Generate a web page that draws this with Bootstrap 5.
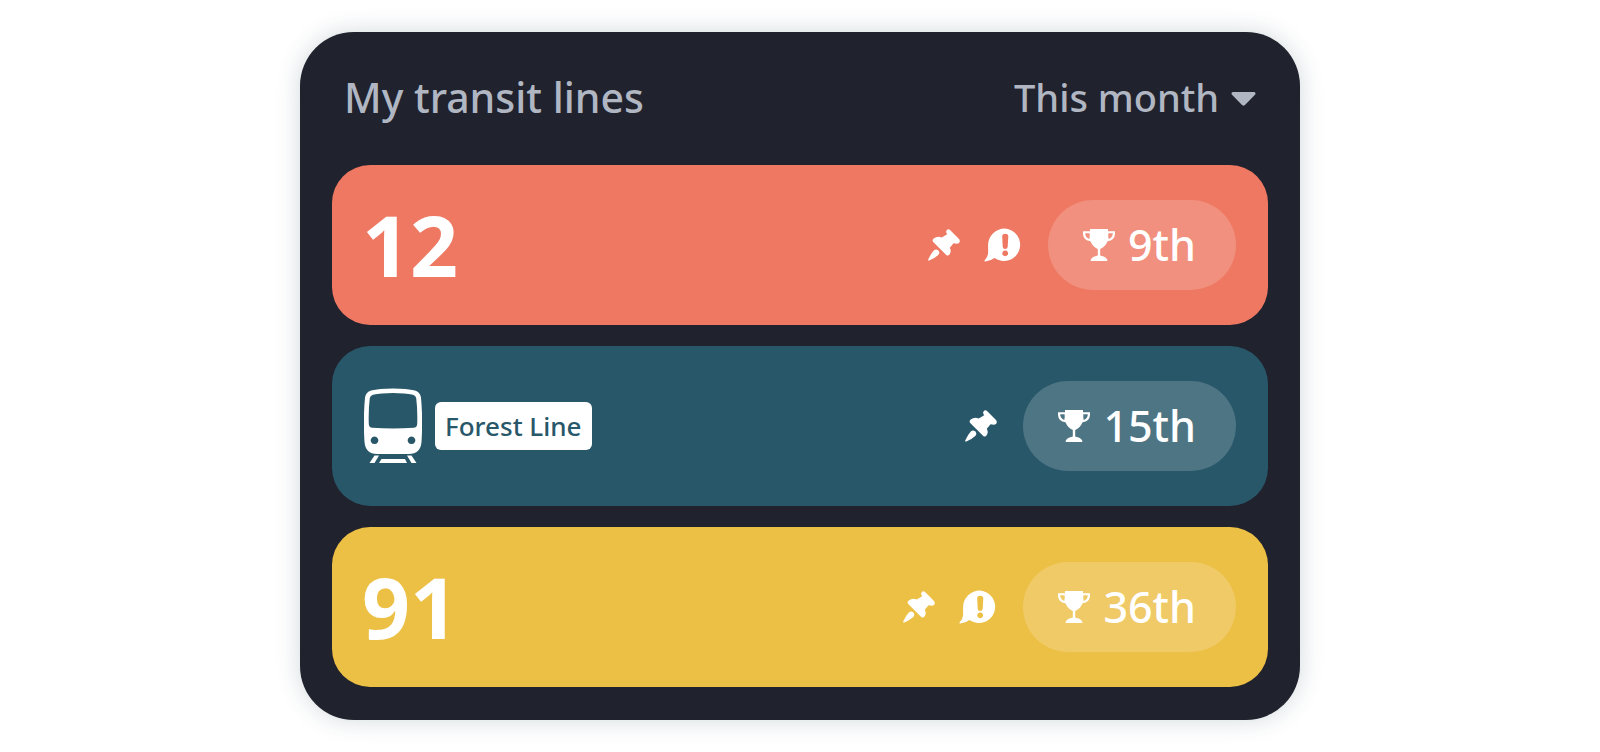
<!DOCTYPE html>
<html lang="en">
<head>
<meta charset="utf-8">
<meta name="viewport" content="width=device-width, initial-scale=1">
<title>My transit lines</title>
<link href="https://cdn.jsdelivr.net/npm/bootstrap@5.3.0/dist/css/bootstrap.min.css" rel="stylesheet">
<style>
  body { background: #fff; font-family: "Noto Sans", "Open Sans", sans-serif; }
  .panel { max-width: 1000px; padding: 32px 32px 33px; background: #20222d; border-radius: 54px; box-shadow: 0 0 24px rgba(32, 66, 82, .2); }
  .panel-head { height: 101px; padding: 0 12px; color: #b0b7c3; }
  .panel-title { font-size: 41px; line-height: 66px; font-weight: 500; }
  .period { gap: 11px; font-size: 38px; line-height: 66px; font-weight: 500; }
  .period select { appearance: none; color: inherit; background: transparent; font: inherit; }
  .period svg { margin-top: 4px; }
  .line-list { gap: 21px; }
  .line-row { height: 160px; padding: 0 32px 0 30px; border-radius: 38px; color: #fff; }
  .line-coral { background: #ee7862; }
  .line-teal { background: #28576a; }
  .line-gold { background: #ecbf45; }
  .line-number { font-size: 84px; line-height: 96px; font-weight: 700; }
  .vehicle { margin: 0 13px 0 2px; }
  .line-name { height: 48px; padding: 0 10px; border-radius: 6px; background: #fff; color: #28576a; font-size: 26px; line-height: 48px; font-weight: 500; }
  .status { gap: 24px; margin-right: 26px; }
  .rank { height: 90px; padding: 0 40px 0 35px; gap: 13px; border-radius: 45px; background: rgba(255, 255, 255, .18); font-size: 43px; line-height: 90px; font-weight: 500; }
  svg { display: block; flex: none; }
</style>
</head>
<body>
<svg width="0" height="0" class="position-absolute" aria-hidden="true">
  <symbol id="pin" viewBox="0 0 32 32">
    <path d="M18.500 1.500Q20-.8 21.800 .8L31 10Q32.600 12 31 14Q29.500 15.200 25.600 14.300L21.800 18.700Q23.800 22.500 21.500 25.500Q20 27.600 18 25.700L5.200 13Q3.800 11.300 5.700 9.600Q9.500 6.700 13.700 8.600L19.200 5.300Q17.500 3.200 18.500 1.500Z"/>
    <path d="M6 21.300Q8.100 19.500 10.300 21.500Q12.300 23.800 10.300 25.900Q7.500 28.600 1.300 31.500Q-.3 31.700.3 30.300Q3.200 24.200 6 21.300Z"/>
  </symbol>
  <symbol id="alert" viewBox="0 0 38 34">
    <path fill-rule="evenodd" d="M21 .5a16.300 16.300 0 1 1-10.500 29.600Q6.500 33.300 1.200 33.500Q-.3 33.400.7 32.300Q4 28.500 4.100 25V17A16.700 16.700 0 0 1 21 .5ZM18.200 8.300L18.700 18.800Q19 21 21.200 21Q23.400 21 23.700 18.800L24.300 8.300Q24.300 5.800 21.200 5.800Q18.200 5.800 18.200 8.300ZM21.200 22.500a2.900 2.900 0 1 0 .01 0Z"/>
  </symbol>
  <symbol id="trophy" viewBox="0 0 32 32">
    <path fill-rule="evenodd" d="M7 0H25V2.200H32V5Q31.500 11.500 24.600 12.300Q22 18.200 17.200 20V26.500Q22.800 27.600 24.300 30.800V32H7.700V30.800Q9.200 27.600 14.800 26.500V20Q10 18.200 7.400 12.300Q.5 11.500 0 5V2.200H7ZM2.200 4.300Q2.200 8.700 6.300 9.900Q7 7 6.600 4.300ZM29.800 4.300H25.400Q25 7 25.700 9.900Q29.800 8.700 29.800 4.300Z"/>
  </symbol>
</svg>

<main class="container-fluid py-3 px-3">
  <section class="panel mx-auto my-3">
    <header class="panel-head d-flex justify-content-between align-items-start">
      <h1 class="panel-title m-0">My transit lines</h1>
      <label class="period d-flex align-items-center">
        <select class="border-0 p-0" aria-label="Period"><option>This month</option></select>
        <svg width="25" height="14" viewBox="0 0 25 14" fill="currentColor" aria-hidden="true"><path d="M2 0H23Q25.500.7 24 2.700L14.500 12.500Q12.500 14.800 10.500 12.500L1 2.700Q-.5.7 2 0Z"/></svg>
      </label>
    </header>

    <div class="line-list d-flex flex-column">
      <article class="line-row line-coral d-flex align-items-center">
        <span class="line-number">12</span>
        <div class="status d-flex align-items-center ms-auto">
          <svg width="32" height="32" fill="currentColor"><use href="#pin"/></svg>
          <svg width="38" height="34" fill="currentColor"><use href="#alert"/></svg>
        </div>
        <div class="rank d-flex align-items-center">
          <svg width="32" height="32" fill="currentColor"><use href="#trophy"/></svg>
          <span>9th</span>
        </div>
      </article>

      <article class="line-row line-teal d-flex align-items-center">
        <svg class="vehicle" width="58" height="76" viewBox="0 0 58 76" fill="currentColor" aria-hidden="true">
          <path fill-rule="evenodd" d="M29 .5Q43 .5 51 2.500Q56 4 57 9.500Q59 31 57.500 54Q56.500 66 45 66H13Q1.500 66 .5 54Q-1 31 1 9.500Q2 4 7 2.500Q15 .5 29 .5ZM29 5Q17 5 9 6.800Q6.300 7.500 5.800 10Q4.300 22 4.800 36Q5 39.500 8.300 39.800Q29 41 49.700 39.800Q53 39.500 53.200 36Q53.700 22 52.200 10Q51.700 7.500 49 6.800Q41 5 29 5ZM10.500 48.500a3.800 3.800 0 1 0 .01 0ZM47.500 48.500a3.800 3.800 0 1 0 .01 0Z"/>
          <path d="M10.500 67.500H15L10.500 75H5.500ZM43 67.500H47.500L52.500 75H47.500ZM17.500 71H41L43 75H15Z"/>
        </svg>
        <span class="line-name">Forest Line</span>
        <div class="status d-flex align-items-center ms-auto">
          <svg width="32" height="32" fill="currentColor"><use href="#pin"/></svg>
        </div>
        <div class="rank d-flex align-items-center">
          <svg width="32" height="32" fill="currentColor"><use href="#trophy"/></svg>
          <span>15th</span>
        </div>
      </article>

      <article class="line-row line-gold d-flex align-items-center">
        <span class="line-number">91</span>
        <div class="status d-flex align-items-center ms-auto">
          <svg width="32" height="32" fill="currentColor"><use href="#pin"/></svg>
          <svg width="38" height="34" fill="currentColor"><use href="#alert"/></svg>
        </div>
        <div class="rank d-flex align-items-center">
          <svg width="32" height="32" fill="currentColor"><use href="#trophy"/></svg>
          <span>36th</span>
        </div>
      </article>
    </div>
  </section>
</main>
<script src="https://cdn.jsdelivr.net/npm/bootstrap@5.3.0/dist/js/bootstrap.bundle.min.js"></script>
</body>
</html>
